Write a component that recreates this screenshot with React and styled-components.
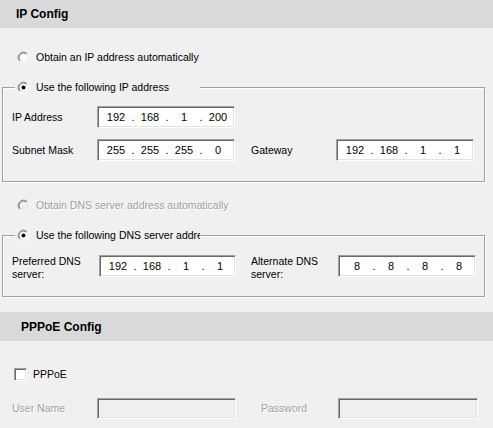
import React from "react";
import styled, { createGlobalStyle, css } from "styled-components";

const GlobalStyle = createGlobalStyle`
  html, body { margin: 0; padding: 0; background: #f0f0f0; }
  body {
    font-family: "Liberation Sans", Arial, sans-serif;
    font-size: 10.5px;
    color: #000;
  }
  * { box-sizing: border-box; }
`;

const Page = styled.div`
  width: 493px;
  height: 428px;
  overflow: hidden;
  background: #f0f0f0;
  display: flex;
  flex-direction: column;
`;

const SectionHeader = styled.div`
  height: ${(p) => p.$height}px;
  margin-top: ${(p) => p.$top || 0}px;
  background: #d9d9d9;
  display: flex;
  align-items: center;
  padding-left: ${(p) => p.$indent}px;
  font-weight: bold;
  font-size: 12px;
`;

const SectionBody = styled.div`
  display: flex;
  flex-direction: column;
  padding: ${(p) => p.$pad};
`;

const OptionRow = styled.div`
  display: flex;
  align-items: center;
  gap: ${(p) => p.$gap || 6}px;
  height: 13px;
  line-height: 13px;
  margin-left: ${(p) => p.$left || 0}px;
  margin-top: ${(p) => p.$top || 0}px;
  white-space: nowrap;
  ${(p) =>
    p.$disabled &&
    css`
      color: #a0a0a0;
      text-shadow: 1px 1px 0 #fff;
    `}
`;

const GroupBox = styled.div`
  position: relative;
  margin-top: ${(p) => p.$top}px;
  border: 1px solid #a0a0a0;
  box-shadow: inset 1px 1px 0 #fff, 1px 1px 0 #fff;
  padding: ${(p) => p.$pad};
  display: flex;
  flex-direction: column;
  gap: 11px;
`;

const Legend = styled.div`
  position: absolute;
  top: -7px;
  left: 12px;
  width: 185px;
  height: 13px;
  line-height: 13px;
  padding-left: 2px;
  background: #f0f0f0;
  overflow: hidden;
  white-space: nowrap;
  display: flex;
  align-items: center;
  gap: 6px;
`;

const Row = styled.div`
  display: flex;
  align-items: ${(p) => p.$align || "center"};
  gap: ${(p) => p.$gap || 16}px;
  margin-top: ${(p) => p.$top || 0}px;
`;

const Field = styled.div`
  display: flex;
  align-items: ${(p) => p.$align || "center"};
`;

const Label = styled.div`
  width: ${(p) => p.$width}px;
  flex: none;
  line-height: 13px;
  ${(p) =>
    p.$disabled &&
    css`
      color: #a0a0a0;
      text-shadow: 1px 1px 0 #fff;
    `}
`;

const Sunken = styled.div`
  width: ${(p) => p.$width}px;
  height: ${(p) => p.$height || 22}px;
  flex: none;
  border: 1px solid;
  border-color: #a0a0a0 #fff #fff #a0a0a0;
  box-shadow: inset 1px 1px 0 #696969, inset -1px -1px 0 #e3e3e3;
  background: ${(p) => (p.$disabled ? "#f0f0f0" : "#fff")};
  display: flex;
  align-items: center;
  padding-left: 4px;
  font-size: 11px;
`;

const Octet = styled.span`
  width: 28px;
  text-align: center;
  flex: none;
`;

const Dot = styled.span`
  width: 6px;
  text-align: center;
  flex: none;
`;

const CheckBox = styled.span`
  width: 13px;
  height: 13px;
  flex: none;
  border: 1px solid;
  border-color: #a0a0a0 #fff #fff #a0a0a0;
  box-shadow: inset 1px 1px 0 #696969, inset -1px -1px 0 #e3e3e3;
  background: #fff;
`;

const Radio = ({ checked, disabled }) => (
  <svg width="13" height="13" viewBox="0 0 13 13" style={{ flex: "none" }}>
    <circle cx="6.5" cy="6.5" r="5.5" fill={disabled ? "#f0f0f0" : "#fff"} />
    <path d="M2.61 10.39 A5.5 5.5 0 0 1 10.39 2.61" fill="none" stroke="#a0a0a0" strokeWidth="1" />
    <path d="M10.39 2.61 A5.5 5.5 0 0 1 2.61 10.39" fill="none" stroke="#ffffff" strokeWidth="1" />
    <path d="M3.32 9.68 A4.5 4.5 0 0 1 9.68 3.32" fill="none" stroke="#696969" strokeWidth="1" />
    <path d="M9.68 3.32 A4.5 4.5 0 0 1 3.32 9.68" fill="none" stroke="#e3e3e3" strokeWidth="1" />
    {checked && <circle cx="6.5" cy="6.5" r="2" fill="#000" />}
  </svg>
);

const IpBox = ({ value, width = 138 }) => {
  const parts = value.split(".");
  return (
    <Sunken $width={width}>
      {parts.map((p, i) => (
        <React.Fragment key={i}>
          <Octet>{p}</Octet>
          {i < parts.length - 1 && <Dot>.</Dot>}
        </React.Fragment>
      ))}
    </Sunken>
  );
};

export default function App() {
  return (
    <>
      <GlobalStyle />
      <Page>
        <SectionHeader $height={28} $indent={16}>IP Config</SectionHeader>
        <SectionBody $pad="23px 8px 0 2px">
          <OptionRow $left={15}>
            <Radio />
            <span>Obtain an IP address automatically</span>
          </OptionRow>

          <GroupBox $top={23} $pad="18px 0 20px 9px">
            <Legend>
              <Radio checked />
              <span>Use the following IP address</span>
            </Legend>
            <Row>
              <Field>
                <Label $width={85}>IP Address</Label>
                <IpBox value="192.168.1.200" />
              </Field>
            </Row>
            <Row>
              <Field>
                <Label $width={85}>Subnet Mask</Label>
                <IpBox value="255.255.255.0" />
              </Field>
              <Field>
                <Label $width={85}>Gateway</Label>
                <IpBox value="192.168.1.1" />
              </Field>
            </Row>
          </GroupBox>

          <OptionRow $left={15} $top={17} $disabled>
            <Radio disabled />
            <span>Obtain DNS server address automatically</span>
          </OptionRow>

          <GroupBox $top={23} $pad="19px 0 15px 9px">
            <Legend>
              <Radio checked />
              <span>Use the following DNS server address</span>
            </Legend>
            <Row $gap={15}>
              <Field $align="flex-start">
                <Label $width={87}>Preferred DNS server:</Label>
                <IpBox value="192.168.1.1" width={137} />
              </Field>
              <Field $align="flex-start">
                <Label $width={87}>Alternate DNS server:</Label>
                <IpBox value="8.8.8.8" />
              </Field>
            </Row>
          </GroupBox>
        </SectionBody>

        <SectionHeader $height={29} $indent={21} $top={15}>PPPoE Config</SectionHeader>
        <SectionBody $pad="27px 8px 0 12px">
          <OptionRow $left={2}>
            <CheckBox />
            <span>PPPoE</span>
          </OptionRow>
          <Row $gap={25} $top={17}>
            <Field>
              <Label $width={85} $disabled>User Name</Label>
              <Sunken $width={139} $height={21} $disabled />
            </Field>
            <Field>
              <Label $width={77} $disabled>Password</Label>
              <Sunken $width={140} $height={21} $disabled />
            </Field>
          </Row>
        </SectionBody>
      </Page>
    </>
  );
}
